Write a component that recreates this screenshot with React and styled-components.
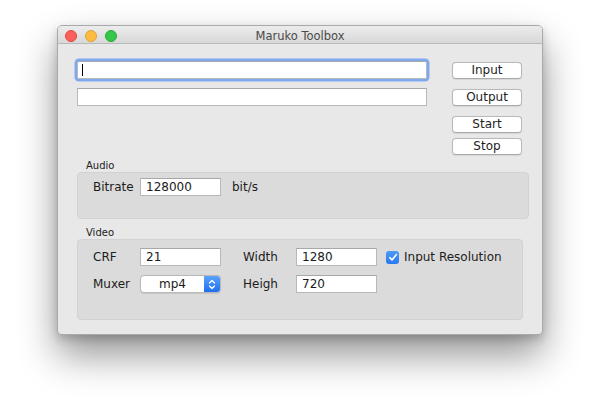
import React from "react";
import styled, { createGlobalStyle } from "styled-components";

const GlobalStyle = createGlobalStyle`
  html, body {
    margin: 0;
    padding: 0;
    background: #ffffff;
  }
  body {
    font-family: "DejaVu Sans", "Liberation Sans", sans-serif;
    color: #1c1c1c;
  }
`;

const Desktop = styled.div`
  width: 600px;
  height: 400px;
  padding: 25px 0 0 57px;
  box-sizing: border-box;
`;

const Window = styled.div`
  width: 486px;
  height: 310px;
  box-sizing: border-box;
  background: #e8e8e8;
  border: 1px solid #a9a9a9;
  border-radius: 5px 5px 4px 4px;
  box-shadow: 0 20px 38px rgba(0, 0, 0, 0.42), 0 4px 10px rgba(0, 0, 0, 0.18);
  display: flex;
  flex-direction: column;
  overflow: hidden;
`;

const TitleBar = styled.div`
  height: 18px;
  flex: 0 0 18px;
  position: relative;
  display: flex;
  align-items: center;
  padding: 2px 0 0 7px;
  box-sizing: border-box;
  gap: 8px;
  background: linear-gradient(#ececec, #d8d8d8);
  border-bottom: 1px solid #b9b9b9;
`;

const Light = styled.span`
  width: 12px;
  height: 12px;
  border-radius: 50%;
  box-sizing: border-box;
  background: ${(p) => p.$fill};
  border: 0.5px solid ${(p) => p.$edge};
`;

const Title = styled.div`
  position: absolute;
  left: 0;
  right: 0;
  top: 3px;
  text-align: center;
  font-size: 11.5px;
  color: #4a4a4a;
  pointer-events: none;
`;

const Content = styled.div`
  display: flex;
  flex-direction: column;
  padding: 17px 0 0 19px;
`;

const TopSection = styled.div`
  display: flex;
  gap: 25px;
`;

const FieldColumn = styled.div`
  display: flex;
  flex-direction: column;
  gap: 9px;
`;

const ButtonColumn = styled.div`
  display: flex;
  flex-direction: column;
  gap: 10px;
  padding-top: 1px;
`;

const ButtonPair = styled.div`
  display: flex;
  flex-direction: column;
  gap: 5px;
`;

const Field = styled.div`
  position: relative;
  width: ${(p) => p.$w}px;
  height: 18px;
  box-sizing: border-box;
  background: #ffffff;
  border: 1px solid #b8b8b8;
  border-top-color: #a8a8a8;
  font-size: 12px;
  line-height: 16px;
  padding-left: 5px;
  color: #1a1a1a;
  box-shadow: ${(p) =>
    p.$focused ? "0 0 0 2.5px rgba(108, 158, 238, 0.85)" : "none"};
  border-radius: ${(p) => (p.$focused ? "2px" : "0")};

  ${(p) =>
    p.$focused &&
    `
    &::before {
      content: "";
      position: absolute;
      left: 4px;
      top: 2px;
      width: 1px;
      height: 12px;
      background: #000;
    }
  `}
`;

const PushButton = styled.button`
  width: 70px;
  height: 17px;
  padding: 0;
  box-sizing: border-box;
  background: #ffffff;
  border: 1px solid #b9b9b9;
  border-bottom-color: #a9a9a9;
  border-radius: 4px;
  font-family: "DejaVu Sans", "Liberation Sans", sans-serif;
  font-size: 12px;
  line-height: 15px;
  color: #1e1e1e;
  box-shadow: 0 0.5px 1px rgba(0, 0, 0, 0.08);
`;

const GroupLabel = styled.div`
  font-size: 10px;
  line-height: 12px;
  height: 12px;
  padding-left: 9px;
  margin-top: ${(p) => p.$gap}px;
  color: #222;
`;

const GroupBox = styled.div`
  width: ${(p) => p.$w}px;
  height: ${(p) => p.$h}px;
  box-sizing: border-box;
  background: #dbdbdb;
  border: 1px solid #d2d2d2;
  border-radius: 4px;
  padding: ${(p) => p.$pad}px 0 0 15px;
`;

const AudioRow = styled.div`
  display: flex;
  align-items: center;
  height: 18px;
`;

const Label = styled.span`
  font-size: 12px;
  color: #1c1c1c;
  white-space: nowrap;
`;

const RowLabel = styled(Label)`
  width: 47px;
  flex: 0 0 47px;
`;

const Unit = styled(Label)`
  margin-left: 11px;
`;

const VideoGrid = styled.div`
  display: grid;
  grid-template-columns: 47px 103px 53px 90px auto;
  grid-auto-rows: 18px;
  row-gap: 9px;
  align-items: center;
`;

const Popup = styled.div`
  width: 81px;
  height: 18px;
  box-sizing: border-box;
  display: flex;
  border: 1px solid #b9b9b9;
  border-radius: 4px;
  background: #ffffff;
  overflow: hidden;
  box-shadow: 0 0.5px 1px rgba(0, 0, 0, 0.1);
`;

const PopupValue = styled.span`
  flex: 1;
  text-align: center;
  font-size: 12px;
  line-height: 16px;
  color: #1a1a1a;
`;

const Stepper = styled.span`
  width: 16px;
  display: flex;
  align-items: center;
  justify-content: center;
  background: linear-gradient(#5ba2fa, #1e6ff1);
`;

const CheckRow = styled.label`
  display: flex;
  align-items: center;
  gap: 5px;
`;

const CheckBox = styled.span`
  width: 13px;
  height: 13px;
  border-radius: 3px;
  background: linear-gradient(#4d99f8, #2a78f0);
  display: flex;
  align-items: center;
  justify-content: center;
`;

function Chevrons() {
  return (
    <svg width="8" height="11" viewBox="0 0 8 11">
      <path
        d="M1.5 4 L4 1.5 L6.5 4 M1.5 7 L4 9.5 L6.5 7"
        fill="none"
        stroke="#ffffff"
        strokeWidth="1.3"
        strokeLinecap="round"
        strokeLinejoin="round"
      />
    </svg>
  );
}

function Check() {
  return (
    <svg width="10" height="9" viewBox="0 0 10 9">
      <path
        d="M1.8 4.6 L4 7 L8.4 1.6"
        fill="none"
        stroke="#ffffff"
        strokeWidth="1.6"
        strokeLinecap="round"
        strokeLinejoin="round"
      />
    </svg>
  );
}

const lights = [
  { fill: "#fc605b", edge: "#de4842" },
  { fill: "#fdbc40", edge: "#dea234" },
  { fill: "#34c84a", edge: "#27aa35" },
];

export default function App() {
  return (
    <>
      <GlobalStyle />
      <Desktop>
        <Window>
          <TitleBar>
            {lights.map((l) => (
              <Light key={l.fill} $fill={l.fill} $edge={l.edge} />
            ))}
            <Title>Maruko Toolbox</Title>
          </TitleBar>

          <Content>
            <TopSection>
              <FieldColumn>
                <Field $w={350} $focused />
                <Field $w={350} />
              </FieldColumn>
              <ButtonColumn>
                <PushButton>Input</PushButton>
                <PushButton>Output</PushButton>
                <ButtonPair>
                  <PushButton>Start</PushButton>
                  <PushButton>Stop</PushButton>
                </ButtonPair>
              </ButtonColumn>
            </TopSection>

            <GroupLabel $gap={5}>Audio</GroupLabel>
            <GroupBox $w={452} $h={47} $pad={5}>
              <AudioRow>
                <RowLabel>Bitrate</RowLabel>
                <Field $w={81}>128000</Field>
                <Unit>bit/s</Unit>
              </AudioRow>
            </GroupBox>

            <GroupLabel $gap={8}>Video</GroupLabel>
            <GroupBox $w={446} $h={81} $pad={8}>
              <VideoGrid>
                <Label>CRF</Label>
                <Field $w={81}>21</Field>
                <Label>Width</Label>
                <Field $w={81}>1280</Field>
                <CheckRow>
                  <CheckBox>
                    <Check />
                  </CheckBox>
                  <Label>Input Resolution</Label>
                </CheckRow>

                <Label>Muxer</Label>
                <Popup>
                  <PopupValue>mp4</PopupValue>
                  <Stepper>
                    <Chevrons />
                  </Stepper>
                </Popup>
                <Label>Heigh</Label>
                <Field $w={81}>720</Field>
              </VideoGrid>
            </GroupBox>
          </Content>
        </Window>
      </Desktop>
    </>
  );
}
